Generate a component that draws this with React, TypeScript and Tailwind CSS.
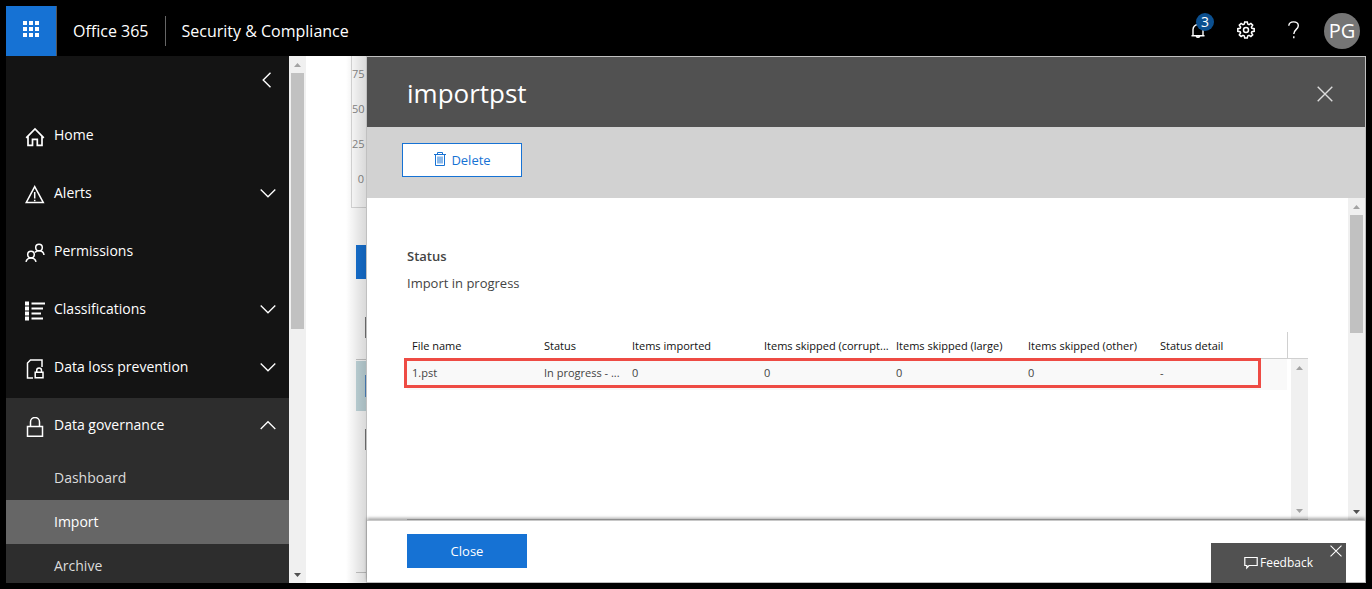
import React from 'react';

type NavItem = {
  label: string;
  icon: React.ReactNode;
  expandable?: boolean;
  children?: string[];
};

const Icon = ({ children, className = 'w-5 h-5' }: { children: React.ReactNode; className?: string }) => (
  <svg className={className} viewBox="0 0 20 20" fill="none" stroke="currentColor" strokeWidth="1.5">
    {children}
  </svg>
);

const Chevron = ({ up }: { up?: boolean }) => (
  <svg className="w-4 h-4 mb-1" viewBox="0 0 16 16" fill="none" stroke="currentColor" strokeWidth="1.3">
    <path d={up ? 'M.7 12L8 4.7 15.3 12' : 'M.7 4.5L8 11.8 15.3 4.5'} />
  </svg>
);

const CloseIcon = ({ className }: { className: string }) => (
  <svg className={className} viewBox="0 0 16 16" fill="none" stroke="currentColor" strokeWidth="1.4">
    <path d="M.7.7l14.6 14.6M15.3.7L.7 15.3" />
  </svg>
);

const navItems: NavItem[] = [
  {
    label: 'Home',
    icon: <Icon><path d="M1.2 10.8L10 2l8.8 8.8M3 9.5v8.8h4.5v-6h4.8v6H17V9.5" strokeWidth="1.7" /></Icon>,
  },
  {
    label: 'Alerts',
    expandable: true,
    icon: (
      <Icon>
        <path d="M9.7 1.6l8.6 16H1.2z" />
        <path d="M9.7 7v6.5M9.7 14.7v1.5" />
      </Icon>
    ),
  },
  {
    label: 'Permissions',
    icon: (
      <Icon>
        <circle cx="14" cy="4.5" r="3.3" />
        <circle cx="6" cy="11.5" r="3.3" />
        <path d="M1 18.9c.5-2.5 2.500-4 5-4s4.500 1.500 5 4M10 9.400c1-1 2.500-1.600 4-1.600 2.700 0 4.700 1.700 5 4.200" />
      </Icon>
    ),
  },
  {
    label: 'Classifications',
    expandable: true,
    icon: (
      <Icon>
        <path d="M2 .5v19" strokeWidth="4" strokeDasharray="4 1" />
        <path d="M6.500 2.500H20M6.500 7.500H18M6.500 12.500H16M6.500 17.500H18" strokeWidth="1.800" />
      </Icon>
    ),
  },
  {
    label: 'Data loss prevention',
    expandable: true,
    icon: (
      <Icon>
        <path d="M8 19H2.500V4l3-3H17V8" />
        <path d="M10.200 13.200h7.800v5.600h-7.800zM11.700 13v-1.500a2.400 2.400 0 0 1 4.800 0V13" />
      </Icon>
    ),
  },
  {
    label: 'Data governance',
    expandable: true,
    icon: (
      <Icon>
        <path d="M2.500 9.500h15v9.800h-15zM5.500 9.500V5a4.500 4.500 0 0 1 9 0v4.500" />
      </Icon>
    ),
    children: ['Dashboard', 'Import', 'Archive'],
  },
];

const columns = [
  { title: 'File name', value: '1.pst', width: 'w-[132px]' },
  { title: 'Status', value: 'In progress - ...', width: 'w-[88px]' },
  { title: 'Items imported', value: '0', width: 'w-[132px]' },
  { title: 'Items skipped (corrupt...', value: '0', width: 'w-[132px]' },
  { title: 'Items skipped (large)', value: '0', width: 'w-[132px]' },
  { title: 'Items skipped (other)', value: '0', width: 'w-[132px]' },
  { title: 'Status detail', value: '-', width: 'w-[132px]' },
];

const Scrollbar = ({ thumb, muted }: { thumb?: string; muted?: boolean }) => (
  <div className="w-[17px] shrink-0 bg-[#f0f0f0] flex flex-col items-center">
    <svg className="w-[17px] h-[17px] shrink-0" viewBox="0 0 17 17" fill="#a3a3a3">
      <path d="M5 11h7L8.5 7z" />
    </svg>
    <div className="flex-1 min-h-0">{thumb && <div className={`w-[13px] bg-[#c1c1c1] ${thumb}`} />}</div>
    <svg className="w-[17px] h-[17px] shrink-0" viewBox="0 0 17 17" fill={muted ? '#a3a3a3' : '#505050'}>
      <path d="M5 7h7l-3.5 4z" />
    </svg>
  </div>
);

const Header = () => (
  <header className="h-[50px] shrink-0 flex items-center text-white">
    <button aria-label="App launcher" className="w-[51px] h-[50px] bg-[#1672d4] border-r border-[#555] flex items-center justify-center">
      <svg className="w-4 h-4 mb-1" viewBox="0 0 16 16" fill="currentColor">
        {[0, 6, 12].map(y => [0, 6, 12].map(x => <rect key={`${x}-${y}`} x={x} y={y} width="4" height="4" />))}
      </svg>
    </button>
    <a href="#" className="pl-4 pr-4 text-base">Office 365</a>
    <div className="h-[30px] border-l border-[#666]" />
    <a href="#" className="pl-4 text-base">Security &amp; Compliance</a>
    <div className="ml-auto flex items-center">
      <button aria-label="Notifications" className="relative w-12 h-[50px] flex items-center justify-center">
        <svg className="w-4 h-4" viewBox="0 0 16 16" fill="none" stroke="currentColor" strokeWidth="1.4">
          <path d="M1.5 12.7h13M3 12.5v-6a5 5 0 0 1 10 0v6M6.300 13.200a1.800 1.800 0 0 0 3.400 0" />
        </svg>
        <span className="absolute left-[22px] top-[7px] w-[18px] h-[18px] rounded-full bg-[#0b4f8f] text-sm leading-[18px]">3</span>
      </button>
      <button aria-label="Settings" className="w-12 h-[50px] pb-0.5 flex items-center justify-center">
        <svg className="w-[18px] h-[18px]" viewBox="0 0 18 18" fill="none" stroke="currentColor" strokeWidth="1.5">
          <path d="M7.7.9h2.600l.4 2.200 1.300.6 1.900-1.300 1.800 1.800-1.300 1.900.5 1.200 2.300.4v2.600l-2.300.4-.5 1.200 1.300 1.900-1.800 1.800-1.900-1.300-1.300.6-.4 2.200H7.700l-.4-2.200-1.300-.6-1.900 1.300-1.800-1.800 1.300-1.900-.5-1.200-2.300-.4V7.700l2.300-.4.5-1.200-1.300-1.900 1.800-1.800L6 3.700l1.300-.6z" />
          <circle cx="9" cy="9" r="2.5" />
        </svg>
      </button>
      <button aria-label="Help" className="w-12 h-[50px] pb-0.5 flex items-center justify-center">
        <svg className="w-[18px] h-[18px]" viewBox="0 0 18 18" fill="none" stroke="currentColor" strokeWidth="1.4">
          <path d="M3.800 4.800C4 2.300 5.800.9 8.500.9s4.800 1.500 4.800 3.900c0 3.500-4.500 3.800-4.500 8.200M8.800 15.300v2" />
        </svg>
      </button>
      <button className="w-9 h-9 ml-1.5 mr-1.5 rounded-full bg-[#757575] text-xl leading-9">PG</button>
    </div>
  </header>
);

const Sidebar = () => (
  <nav className="w-[283px] shrink-0 bg-[#141414] text-white text-sm overflow-hidden">
    <div className="h-[52px] flex items-center justify-end pr-3.5">
      <button aria-label="Collapse navigation">
        <svg className="w-4 h-4 mb-1" viewBox="0 0 16 16" fill="none" stroke="currentColor" strokeWidth="1.4">
          <path d="M11.5.8L4.2 8l7.3 7.2" />
        </svg>
      </button>
    </div>
    {navItems.map(item => (
      <div key={item.label} className={item.children ? 'bg-[#2d2d2d]' : ''}>
        <button className="w-full h-[58px] pl-[19px] pr-[13px] flex items-center text-left">
          {item.icon}
          <span className="flex-1 pl-[9px] pb-1">{item.label}</span>
          {item.expandable && <Chevron up={!!item.children} />}
        </button>
        {item.children?.map(child => (
          <a
            key={child}
            href="#"
            className={`block h-11 pl-12 leading-[44px] ${child === 'Import' ? 'bg-[#666] text-white' : 'text-[#dcdcdc]'}`}
          >
            {child}
          </a>
        ))}
      </div>
    ))}
  </nav>
);

// Sliver of the job list that stays visible left of the flyout
const JobListEdge = () => (
  <div className="relative w-[60px] shrink-0 overflow-hidden bg-white">
    <div className="ml-[45px] h-[152px] border-l border-b border-[#d8d8d8] text-[11px] leading-[35px] text-[#8a8a8a] text-right pr-0.5">
      <div>75</div>
      <div>50</div>
      <div>25</div>
      <div>0</div>
    </div>
    <div className="ml-[50px] mt-[37px] h-[34px] bg-[#1672d4]" />
    <div className="ml-[59px] mt-[38px] h-[21px] bg-[#777]" />
    <div className="ml-[50px] mt-[21px] h-px bg-[#c8c8c8]" />
    <div className="ml-[50px] mt-px h-[50px] bg-[#c3d9de] flex items-center justify-end">
      <div className="w-px h-[22px] bg-[#4d86c4]" />
    </div>
    <div className="ml-[59px] mt-[18px] h-[21px] bg-[#777]" />
    <div className="ml-[50px] mt-[122px] h-px bg-[#c8c8c8]" />
    <div className="absolute inset-y-0 right-0 w-5 bg-gradient-to-r from-transparent to-black/15" />
  </div>
);

const ImportFlyout = () => (
  <section className="flex-1 min-w-0 flex flex-col bg-white border border-[#c0c0c0]">
    <div className="h-[70px] shrink-0 bg-[#515151] text-white flex items-center justify-between pl-10 pr-8">
      <h1 className="pt-0.5 text-[26px] leading-8">importpst</h1>
      <button aria-label="Close panel" className="text-[#dcdcdc] pt-1">
        <CloseIcon className="w-4 h-4" />
      </button>
    </div>
    <div className="h-[71px] shrink-0 bg-[#d2d2d2] pl-[35px] pt-4">
      <button className="w-[120px] h-[34px] pt-0.5 bg-white border border-[#1672d4] text-[#1672d4] text-[13px] flex items-center justify-center gap-1">
        <svg className="w-3.5 h-3.5 mb-1" viewBox="0 0 14 14" fill="none" stroke="currentColor">
          <path d="M1 2.500h12M4.500 2.300V.5h5v1.800M2.500 2.500v11h9v-11" />
          <path d="M5 4.500v7M7 4.500v7M9 4.500v7" />
        </svg>
        Delete
      </button>
    </div>
    <div className="flex-1 min-h-0 flex overflow-hidden">
      <div className="flex-1 min-w-0 pl-10 pt-12 flex flex-col">
        <h2 className="text-[13px] leading-5 font-semibold text-[#444]">Status</h2>
        <p className="mt-[7px] text-[13px] leading-5 text-[#444]">Import in progress</p>
        <div className="relative mt-[39px] w-[901px] flex-1 min-h-0 flex flex-col border-b border-[#c8c8c8]">
          <div className="absolute left-0 right-0 top-[26px] h-px bg-[#d0d0d0]" />
          <div className="flex flex-1 min-h-0 justify-between">
            <table className="w-[880px] table-fixed self-start text-[11px] text-left">
              <thead>
                <tr className="h-[26px] text-[#111]">
                  {columns.map(col => (
                    <th key={col.title} className={`${col.width} pl-[5px] pt-0.5 font-medium whitespace-nowrap last:border-r last:border-[#d0d0d0]`}>
                      {col.title}
                    </th>
                  ))}
                </tr>
              </thead>
              <tbody>
                <tr className="h-8 bg-[#f9f9f9] text-[#444]">
                  {columns.map(col => (
                    <td key={col.title} className="pl-[5px] pb-0.5 whitespace-nowrap">{col.value}</td>
                  ))}
                </tr>
              </tbody>
            </table>
            <div className="flex pt-[27px]">
              <Scrollbar muted />
            </div>
          </div>
          <div className="absolute -left-[3px] right-[47px] top-[26px] h-[30px] border-3 border-[#ee4b44]" />
        </div>
      </div>
      <Scrollbar thumb="h-[118px]" />
    </div>
    <div className="relative h-[62px] shrink-0 bg-white border-t border-[#c8c8c8] shadow-[0_-2px_3px_rgba(0,0,0,0.35)] flex items-start justify-between pl-10 pr-[19px]">
      <button className="w-[120px] h-[34px] mt-[13px] pt-0.5 bg-[#1672d4] text-white text-[13px]">Close</button>
      <div className="relative w-[135px] h-10 self-end -mb-px bg-[#515151] text-white">
        <button className="w-full h-full flex items-center justify-center gap-0.5 text-xs">
          <svg className="w-3.5 h-3.5" viewBox="0 0 14 14" fill="none" stroke="currentColor" strokeWidth="1.2">
            <path d="M.8 1.5h12.400v8H5l-2.200 2.500V9.500h-2z" />
          </svg>
          Feedback
        </button>
        <button aria-label="Dismiss feedback" className="absolute right-1 top-0.5">
          <CloseIcon className="w-3 h-3" />
        </button>
      </div>
    </div>
  </section>
);

export default function App() {
  return (
    <div className="h-screen p-1.5 bg-black flex flex-col overflow-hidden font-['Segoe_UI','Open_Sans','Noto_Sans',sans-serif]">
      <Header />
      <main className="flex-1 min-h-0 flex">
        <Sidebar />
        <Scrollbar thumb="h-64" />
        <JobListEdge />
        <ImportFlyout />
      </main>
    </div>
  );
}
